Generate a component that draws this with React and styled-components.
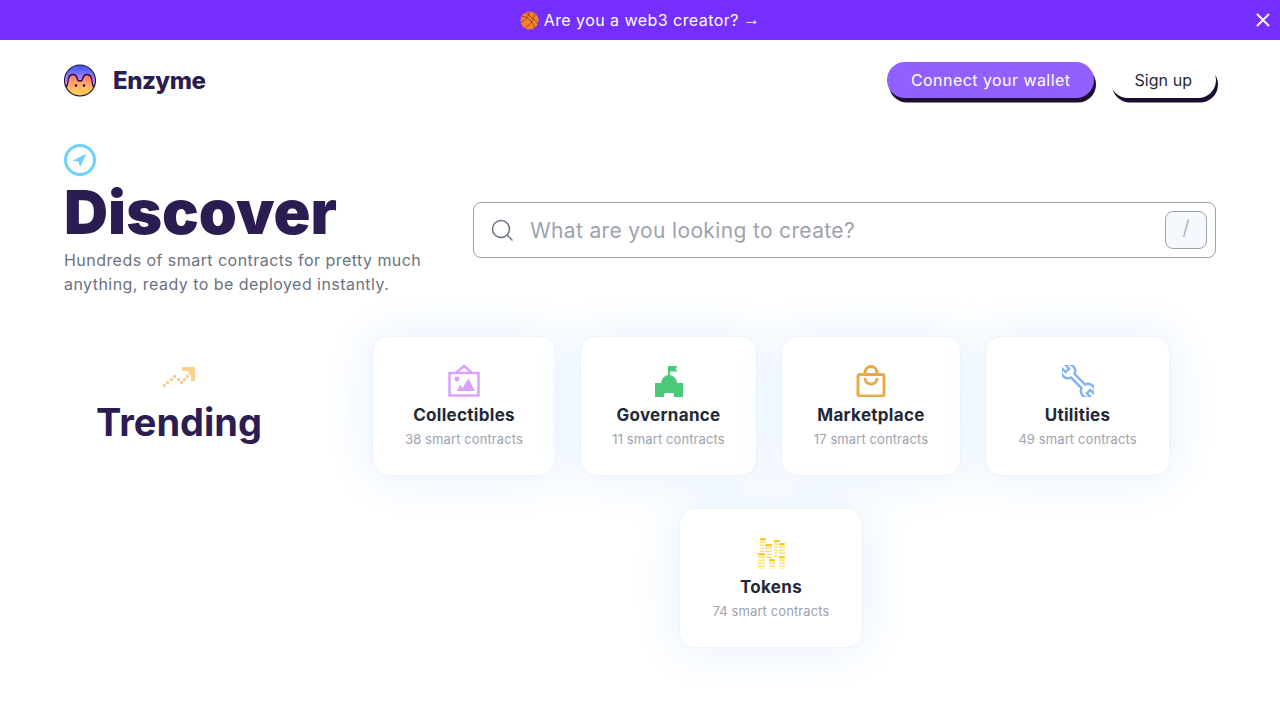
import React from 'react'
import styled, { createGlobalStyle } from 'styled-components';

const GlobalStyle = createGlobalStyle`
  html, body {
    margin: 0;
    padding: 0;
    background: #ffffff;
    font-family: Inter, "Noto Sans", sans-serif;
  }
  * { box-sizing: border-box; }
`;

const CollectiblesIcon = () => (
  <svg width="32" height="32" viewBox="0 0 32 32" fill="none">
    <rect x="1.500" y="8" width="29" height="22.500" stroke="#d8a0ff" strokeWidth="2.400" />
    <path d="M8.500 7.500 16 1l7.500 6.500" stroke="#d8a0ff" strokeWidth="2.400" />
    <circle cx="9" cy="14" r="2.400" fill="#d8a0ff" />
    <path d="M9 26l3-6.500L14.500 23 20.500 13.500 27 26z" fill="#d8a0ff" />
  </svg>
);

const GovernanceIcon = () => (
  <svg width="32" height="32" viewBox="0 0 32 32" fill="#4ac97a">
    <rect x="15" y="1" width="2" height="10" />
    <path d="M15 1h9.500l-2 2.800 2 2.800H15z" />
    <path d="M8 18c.5-5 4-8 8-8s7.500 3 8 8z" />
    <path d="M2 18h28v14H21v-2.500c0-1-1-1.500-2-1.500h-6c-1 0-2 .5-2 1.500V32H2z" />
  </svg>
);

const MarketplaceIcon = () => (
  <svg width="32" height="32" viewBox="0 0 32 32" fill="none" stroke="#e9a94b" strokeWidth="3">
    <path d="M4.500 9.500h23a1.500 1.500 0 0 1 1.500 1.500v18.500a1.500 1.500 0 0 1-1.500 1.500h-23A1.500 1.500 0 0 1 3 29.500V11a1.500 1.500 0 0 1 1.500-1.500z" />
    <path d="M10 9.500V7.500a6 6 0 0 1 12 0v2" />
    <path d="M10 13c0 3.800 2.700 6 6 6s6-2.200 6-6" />
  </svg>
);

const UtilitiesIcon = () => (
  <svg width="32" height="32" viewBox="-16 -16 32 32" fill="#ffffff" stroke="#7fb2fa" strokeWidth="2.400">
    <path
      transform="rotate(45)"
      d="M-7.46 -2.500 L7.46 -2.500 A7 7 0 0 1 20.54 -2.500 L15 -2.500 L15 2.500 L20.54 2.500 A7 7 0 0 1 7.46 2.500 L-7.46 2.500 A7 7 0 0 1 -20.54 2.500 L-15 2.500 L-15 -2.500 L-20.54 -2.500 A7 7 0 0 1 -7.46 -2.500 Z"
    />
  </svg>
);

const coinStacks = [
  { x: 5, y: 1, w: 6, bottom: 18 },
  { x: 19, y: 3, w: 6, bottom: 20 },
  { x: 10, y: 7, w: 7, bottom: 21 },
  { x: 24, y: 6, w: 6, bottom: 20 },
  { x: 3, y: 16, w: 7, bottom: 32 },
  { x: 14, y: 22, w: 6, bottom: 32 },
  { x: 24, y: 19, w: 6, bottom: 32 },
];

const TokensIcon = () => (
  <svg width="32" height="32" viewBox="0 0 32 32">
    {coinStacks.map((s, i) => {
      const rows = [];
      for (let y = s.y + 3.5; y < s.bottom; y += 3) rows.push(y);
      return (
        <g key={i}>
          <rect x={s.x - 1} y={s.y - 1} width={s.w + 2} height={s.bottom - s.y + 1} fill="#ffffff" />
          <rect x={s.x} y={s.y} width={s.w} height="2.400" rx="1" fill="#fbc926" />
          {rows.map((y) => (
            <rect key={y} x={s.x} y={y} width={s.w} height="1.400" fill="#ffdf70" />
          ))}
        </g>
      );
    })}
  </svg>
);

const cards = [
  { title: 'Collectibles', count: 38, width: 184, Icon: CollectiblesIcon },
  { title: 'Governance', count: 11, width: 177, Icon: GovernanceIcon },
  { title: 'Marketplace', count: 17, width: 180, Icon: MarketplaceIcon },
  { title: 'Utilities', count: 49, width: 185, Icon: UtilitiesIcon },
  { title: 'Tokens', count: 74, width: 184, Icon: TokensIcon },
];

const trendPixels = [
  [0, 17], [3, 14], [7, 11], [10, 8], [14, 11], [17, 14], [20, 11], [23, 8], [26, 5],
];

export default function App() {
  return (
    <Page>
      <GlobalStyle />
      <Banner>
        <BannerText>
          <svg width="19" height="19" viewBox="0 0 20 20">
            <circle cx="10" cy="10" r="9.500" fill="#f4822c" />
            <g fill="none" stroke="#8a3d14" strokeWidth="0.900">
              <path d="M2 5.500c5 0 12 6 13.500 12.500" />
              <path d="M5.500 1.800C12 6 16 9 19 14" />
              <path d="M1 12c3-1 7-4 9-11" />
              <path d="M5 18c4-2 9-7 10.500-15" />
            </g>
          </svg>
          Are you a web3 creator?
          <Arrow>→</Arrow>
        </BannerText>
        <CloseButton aria-label="Close">
          <svg width="14" height="14" viewBox="0 0 14 14" stroke="#ffffff" strokeWidth="1.800">
            <path d="M1 1l12 12M13 1L1 13" />
          </svg>
        </CloseButton>
      </Banner>

      <Header>
        <LogoLink>
          <svg width="32" height="33" viewBox="0 0 32 33">
            <defs>
              <linearGradient id="logoTop" x1="0" y1="0" x2="0" y2="1">
                <stop offset="0.080" stopColor="#3f5cff" />
                <stop offset="0.550" stopColor="#d08bff" />
              </linearGradient>
              <linearGradient id="logoBottom" x1="0" y1="0" x2="0" y2="1">
                <stop offset="0" stopColor="#ff6f7a" />
                <stop offset="0.700" stopColor="#ffc65a" />
              </linearGradient>
              <clipPath id="logoClip">
                <circle cx="16" cy="16.500" r="15.500" />
              </clipPath>
            </defs>
            <g clipPath="url(#logoClip)">
              <rect width="32" height="33" fill="url(#logoTop)" />
              <path
                d="M0 24c2.500 0 3.500-2 3.800-6C4.200 13 5.800 10.500 8.800 10.500S13 13 13.500 15.500c.5 2 4.500 2 5 0C19 13 20.200 10.500 23.200 10.500s4.600 2.500 5 7.500c.3 4 1.300 6 3.800 6v9H0z"
                fill="url(#logoBottom)"
                stroke="#1a0f2e"
                strokeWidth="1.300"
              />
            </g>
            <circle cx="12" cy="21.500" r="1.200" fill="#1a0f2e" />
            <circle cx="20" cy="21.500" r="1.200" fill="#1a0f2e" />
            <circle cx="16" cy="16.500" r="15.500" fill="none" stroke="#1a0f2e" strokeWidth="1.100" />
          </svg>
          <LogoText>Enzyme</LogoText>
        </LogoLink>
        <HeaderActions>
          <PillButton primary>Connect your wallet</PillButton>
          <PillButton>Sign up</PillButton>
        </HeaderActions>
      </Header>

      <Hero>
        <HeroIntro>
          <svg width="32" height="32" viewBox="0 0 32 32">
            <circle cx="16" cy="16" r="14.500" fill="none" stroke="#6dd0ff" strokeWidth="3" />
            <path d="M22.500 9.500 8.700 16.700l6 1 1.300 5.600z" fill="#6dd0ff" />
          </svg>
          <HeroTitle>Discover</HeroTitle>
          <HeroText>Hundreds of smart contracts for pretty much anything, ready to be deployed instantly.</HeroText>
        </HeroIntro>
        <SearchBox>
          <svg width="24" height="24" viewBox="0 0 24 24" fill="none" stroke="#6b7280" strokeWidth="1.500" strokeLinecap="round">
            <circle cx="11" cy="11" r="8.500" />
            <path d="M17.500 17.500 22 22" />
          </svg>
          <SearchInput placeholder="What are you looking to create?" />
          <KeyHint>/</KeyHint>
        </SearchBox>
      </Hero>

      <Gallery>
        <TrendingColumn>
          <svg width="32" height="20" viewBox="0 0 32 20" fill="#fbcf8e">
            {trendPixels.map(([x, y]) => (
              <rect key={`${x}-${y}`} x={x} y={y} width="3" height="3" />
            ))}
            <path d="M19 0h13v14h-4V5.500h-3V4h-6z" />
          </svg>
          <TrendingTitle>Trending</TrendingTitle>
        </TrendingColumn>
        <CardGrid>
          {cards.map(({ title, count, width, Icon }) => (
            <Card key={title} width={width}>
              <Icon />
              <CardTitle>{title}</CardTitle>
              <CardCount>{count} smart contracts</CardCount>
            </Card>
          ))}
        </CardGrid>
      </Gallery>
    </Page>
  )
}

const Page = styled.div`
  width: 1280px;
  height: 720px;
  overflow: hidden;
  background: #ffffff;
`;

const Banner = styled.div`
  position: relative;
  display: flex;
  height: 40px;
  align-items: center;
  justify-content: center;
  background: #742fff;
`;

const BannerText = styled.div`
  display: flex;
  align-items: center;
  gap: 5px;
  color: #ffffff;
  font-size: 16px;
  letter-spacing: 0.45px;
`;

const Arrow = styled.span`
  font-family: "Liberation Sans", sans-serif;
  font-size: 17px;
  margin-left: -1px;
`;

const CloseButton = styled.button`
  position: absolute;
  top: 13px;
  right: 10px;
  display: flex;
  padding: 0;
  border: 0;
  background: none;
`;

const Header = styled.header`
  display: flex;
  height: 80px;
  padding: 0 64px;
  align-items: center;
  justify-content: space-between;
`;

const LogoLink = styled.div`
  display: flex;
  align-items: center;
  gap: 17px;
`;

const LogoText = styled.span`
  color: #2b1d52;
  font-size: 24px;
  font-weight: 800;
  letter-spacing: -0.5px;
`;

const HeaderActions = styled.div`
  display: flex;
  gap: 16px;
`;

const PillButton = styled.button`
  height: 36px;
  padding: 0 24px;
  border: 0;
  border-radius: 18px;
  background: ${(props) => (props.primary ? "#9160ff" : "#ffffff")};
  box-shadow: 2px 4.5px 0 #1a0f2e;
  color: ${(props) => (props.primary ? "#ffffff" : "#1f2937")};
  font-family: inherit;
  font-size: 16px;
  letter-spacing: ${(props) => (props.primary ? "0.45px" : "0.05px")};
`;

const Hero = styled.section`
  display: flex;
  margin-top: 24px;
  padding: 0 64px;
  gap: 32px;
  align-items: center;
`;

const HeroIntro = styled.div`
  display: flex;
  width: 377px;
  flex-direction: column;
`;

const HeroTitle = styled.h1`
  margin: 0;
  color: #2b1d52;
  font-size: 61px;
  font-weight: 900;
  line-height: 72px;
`;

const HeroText = styled.p`
  margin: 0;
  color: #6b7280;
  font-size: 16px;
  line-height: 24px;
  letter-spacing: 0.45px;
`;

const SearchBox = styled.div`
  display: flex;
  flex: 1;
  height: 56px;
  margin-top: 20px;
  padding: 0 8px 0 16px;
  gap: 16px;
  align-items: center;
  border: 1px solid #9ca3af;
  border-radius: 8px;
`;

const SearchInput = styled.input`
  flex: 1;
  min-width: 0;
  padding: 0;
  border: 0;
  outline: none;
  background: none;
  font-family: inherit;
  font-size: 21px;
  letter-spacing: 0.35px;

  &::placeholder {
    color: #9ca3af;
    opacity: 1;
  }
`;

const KeyHint = styled.span`
  display: flex;
  width: 42px;
  height: 38px;
  padding-bottom: 4px;
  align-items: center;
  justify-content: center;
  border: 1px solid #9ca3af;
  border-radius: 8px;
  background: #f5f8fc;
  color: #9ca3af;
  font-size: 20px;
  font-weight: 300;
`;

const Gallery = styled.section`
  display: flex;
  margin-top: 40px;
  padding: 0 64px;
  gap: 32px;
`;

const TrendingColumn = styled.div`
  display: flex;
  width: 230px;
  padding-top: 31px;
  flex-direction: column;
  align-items: center;
`;

const TrendingTitle = styled.h2`
  margin: 13px 0 0;
  color: #2b1d52;
  font-size: 38px;
  font-weight: 700;
  line-height: 44px;
`;

const CardGrid = styled.div`
  display: flex;
  flex: 1;
  flex-wrap: wrap;
  gap: 32px 24px;
  justify-content: center;
`;

const Card = styled.div`
  display: flex;
  width: ${(props) => props.width}px;
  height: 140px;
  padding-top: 28px;
  flex-direction: column;
  align-items: center;
  border: 1px solid #eef3fa;
  border-radius: 16px;
  background: #ffffff;
  box-shadow: 0 0 50px 6px #e8f3ff;
`;

const CardTitle = styled.div`
  margin-top: 6px;
  color: #1f2937;
  font-size: 17px;
  font-weight: 700;
  line-height: 24px;
  letter-spacing: 0.3px;
`;

const CardCount = styled.div`
  margin-top: 3px;
  color: #9ca3af;
  font-size: 13px;
  line-height: 18px;
  letter-spacing: 0.1px;
`;
